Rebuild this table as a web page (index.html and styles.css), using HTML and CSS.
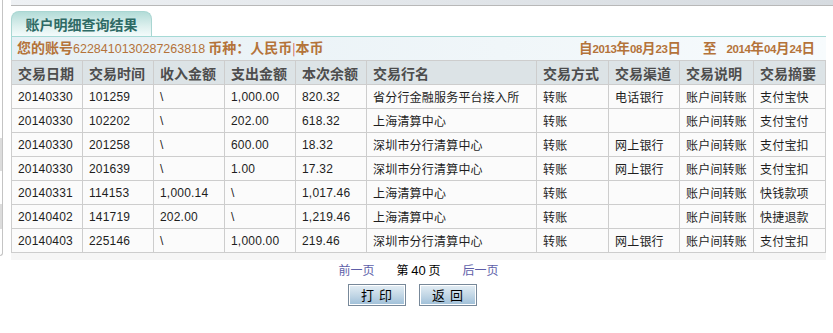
FILE: index.html
```html
<!DOCTYPE html>
<html lang="zh-CN">
<head>
<meta charset="utf-8">
<title>账户明细查询结果</title>
<link rel="stylesheet" href="styles.css">
</head>
<body>
<div class="side"></div>
<div class="main">
  <div class="topbar"></div>
  <div class="panel">
    <div class="tab">账户明细查询结果</div>
    <div class="info">
      <div class="info-left">您的账号<span class="num">6228410130287263818</span> 币种：人民币<span class="sep">|</span>本币</div>
      <div class="info-right">自<span class="d">2013</span>年<span class="d">08</span>月<span class="d">23</span>日<span class="to">至</span><span class="d">2014</span>年<span class="d">04</span>月<span class="d">24</span>日</div>
    </div>
    <table class="grid">
      <colgroup>
        <col class="c71"><col class="c71"><col class="c71"><col class="c71"><col class="c71">
        <col class="c170"><col class="c72"><col class="c71"><col class="c74"><col class="c72">
      </colgroup>
      <thead>
        <tr><th>交易日期</th><th>交易时间</th><th>收入金额</th><th>支出金额</th><th>本次余额</th><th>交易行名</th><th>交易方式</th><th>交易渠道</th><th>交易说明</th><th>交易摘要</th></tr>
      </thead>
      <tbody>
        <tr><td>20140330</td><td>101259</td><td>\</td><td>1,000.00</td><td>820.32</td><td>省分行金融服务平台接入所</td><td>转账</td><td>电话银行</td><td>账户间转账</td><td>支付宝快</td></tr>
        <tr><td>20140330</td><td>102202</td><td>\</td><td>202.00</td><td>618.32</td><td>上海清算中心</td><td>转账</td><td></td><td>账户间转账</td><td>支付宝付</td></tr>
        <tr><td>20140330</td><td>201258</td><td>\</td><td>600.00</td><td>18.32</td><td>深圳市分行清算中心</td><td>转账</td><td>网上银行</td><td>账户间转账</td><td>支付宝扣</td></tr>
        <tr><td>20140330</td><td>201639</td><td>\</td><td>1.00</td><td>17.32</td><td>深圳市分行清算中心</td><td>转账</td><td>网上银行</td><td>账户间转账</td><td>支付宝扣</td></tr>
        <tr><td>20140331</td><td>114153</td><td>1,000.14</td><td>\</td><td>1,017.46</td><td>上海清算中心</td><td>转账</td><td></td><td>账户间转账</td><td>快钱款项</td></tr>
        <tr><td>20140402</td><td>141719</td><td>202.00</td><td>\</td><td>1,219.46</td><td>上海清算中心</td><td>转账</td><td></td><td>账户间转账</td><td>快捷退款</td></tr>
        <tr><td>20140403</td><td>225146</td><td>\</td><td>1,000.00</td><td>219.46</td><td>深圳市分行清算中心</td><td>转账</td><td>网上银行</td><td>账户间转账</td><td>支付宝扣</td></tr>
      </tbody>
    </table>
    <div class="band"></div>
    <div class="pager">
      <a class="link" href="#">前一页</a>
      <span class="cur">第 <span class="pn">40</span> 页</span>
      <a class="link" href="#">后一页</a>
    </div>
    <div class="buttons">
      <button class="btn" type="button">打 印</button>
      <button class="btn" type="button">返 回</button>
    </div>
  </div>
</div>
</body>
</html>
```

FILE: styles.css
```css
html, body {
  margin: 0;
  padding: 0;
  background: #fff;
}
body {
  display: flex;
  align-items: flex-start;
  font-family: "Liberation Sans", "Noto Sans CJK SC", sans-serif;
  color: #222;
  width: 833px;
  height: 333px;
  overflow: hidden;
}
.side {
  width: 2px;
  height: 255px;
  border-right: 1px solid #c4c4c4;
  border-bottom: 1px solid #c4c4c4;
  border-bottom-right-radius: 3px;
  background: linear-gradient(to bottom, #fff 138px, #dcdcdc 138px, #dcdcdc 171px, #fff 171px, #fff 204px, #dcdcdc 204px, #dcdcdc 229px, #fff 229px);
  flex: none;
}
.main {
  margin-left: 8px;
  flex: 1;
  display: flex;
  flex-direction: column;
}
.topbar {
  height: 5px;
  border-bottom: 1px solid #b8b8b8;
  background: linear-gradient(to right, #eef1f4, #d6dbe0);
}
.panel {
  width: 815px;
  margin-top: 5px;
  display: flex;
  flex-direction: column;
}
.tab {
  width: 139px;
  height: 24px;
  border: 1px solid #a9d6d2;
  border-bottom: none;
  border-radius: 8px 8px 0 0;
  background: linear-gradient(to bottom, #b3dcd8, #ddf0ee 60%, #f4fbfb);
  color: #2e6a65;
  font-family: "Noto Sans CJK SC", sans-serif;
  font-weight: bold;
  font-size: 14px;
  line-height: 24px;
  text-align: center;
}
.info {
  height: 23px;
  border-top: 1px solid #a6dad6;
  border-left: 1px solid #a6dad6;
  background: linear-gradient(to right, #e6f0f5, #f0f6f9 60%, #f7fbfd);
  display: flex;
  justify-content: space-between;
  align-items: center;
  padding: 0 11px 0 5px;
  color: #b4733a;
  font-family: "Noto Sans CJK SC", sans-serif;
  font-weight: bold;
  font-size: 14px;
  line-height: 23px;
}
.info .num {
  font-family: "Liberation Sans", sans-serif;
  font-weight: normal;
  font-size: 12.5px;
}
.info .sep {
  color: #d05050;
  font-weight: normal;
  font-size: 12px;
}
.info-right {
  font-size: 13.5px;
}
.info-right .d {
  font-family: "Liberation Sans", sans-serif;
  font-size: 11.5px;
  font-weight: bold;
  letter-spacing: -0.4px;
}
.info-right .to {
  margin: 0 10px 0 22px;
}
.grid {
  width: 815px;
  table-layout: fixed;
  border-collapse: collapse;
  border: 1px solid #cdcdcd;
}
.c71 { width: 71px; }
.c72 { width: 72px; }
.c74 { width: 74px; }
.c170 { width: 170px; }
.grid th, .grid td {
  border: 1px solid #cdcdcd;
  height: 23px;
  padding: 0 0 0 6px;
  text-align: left;
  white-space: nowrap;
  overflow: hidden;
}
.grid th {
  background: #dce3e6;
  color: #4d4d4d;
  font-family: "Noto Sans CJK SC", sans-serif;
  font-weight: bold;
  font-size: 14px;
}
.grid td {
  background: #fbfbfb;
  color: #1e1e1e;
  font-size: 12px;
  letter-spacing: 0.2px;
}
.band {
  height: 7px;
  background: #f6f6f6;
}
.pager {
  display: flex;
  justify-content: center;
  gap: 22px;
  margin-top: 2px;
  font-size: 12px;
  line-height: 16px;
  font-family: "Noto Sans CJK SC", sans-serif;
}
.link {
  color: #5e5ea8;
  text-decoration: none;
}
.cur {
  color: #000;
}
.cur .pn {
  font-family: "Liberation Sans", sans-serif;
  font-size: 13px;
}
.buttons {
  display: flex;
  justify-content: center;
  gap: 13px;
  margin-top: 5px;
  padding-right: 12px;
}
.btn {
  width: 58px;
  height: 22px;
  padding: 0;
  border: 1px solid #778899;
  box-shadow: inset 0 0 0 1px #fff;
  background: linear-gradient(to bottom, #e4eef5, #c3d7e6 50%, #9ebfd8);
  font-family: "Noto Sans CJK SC", sans-serif;
  font-size: 13px;
  color: #000;
  letter-spacing: 1px;
  line-height: 20px;
}
```
